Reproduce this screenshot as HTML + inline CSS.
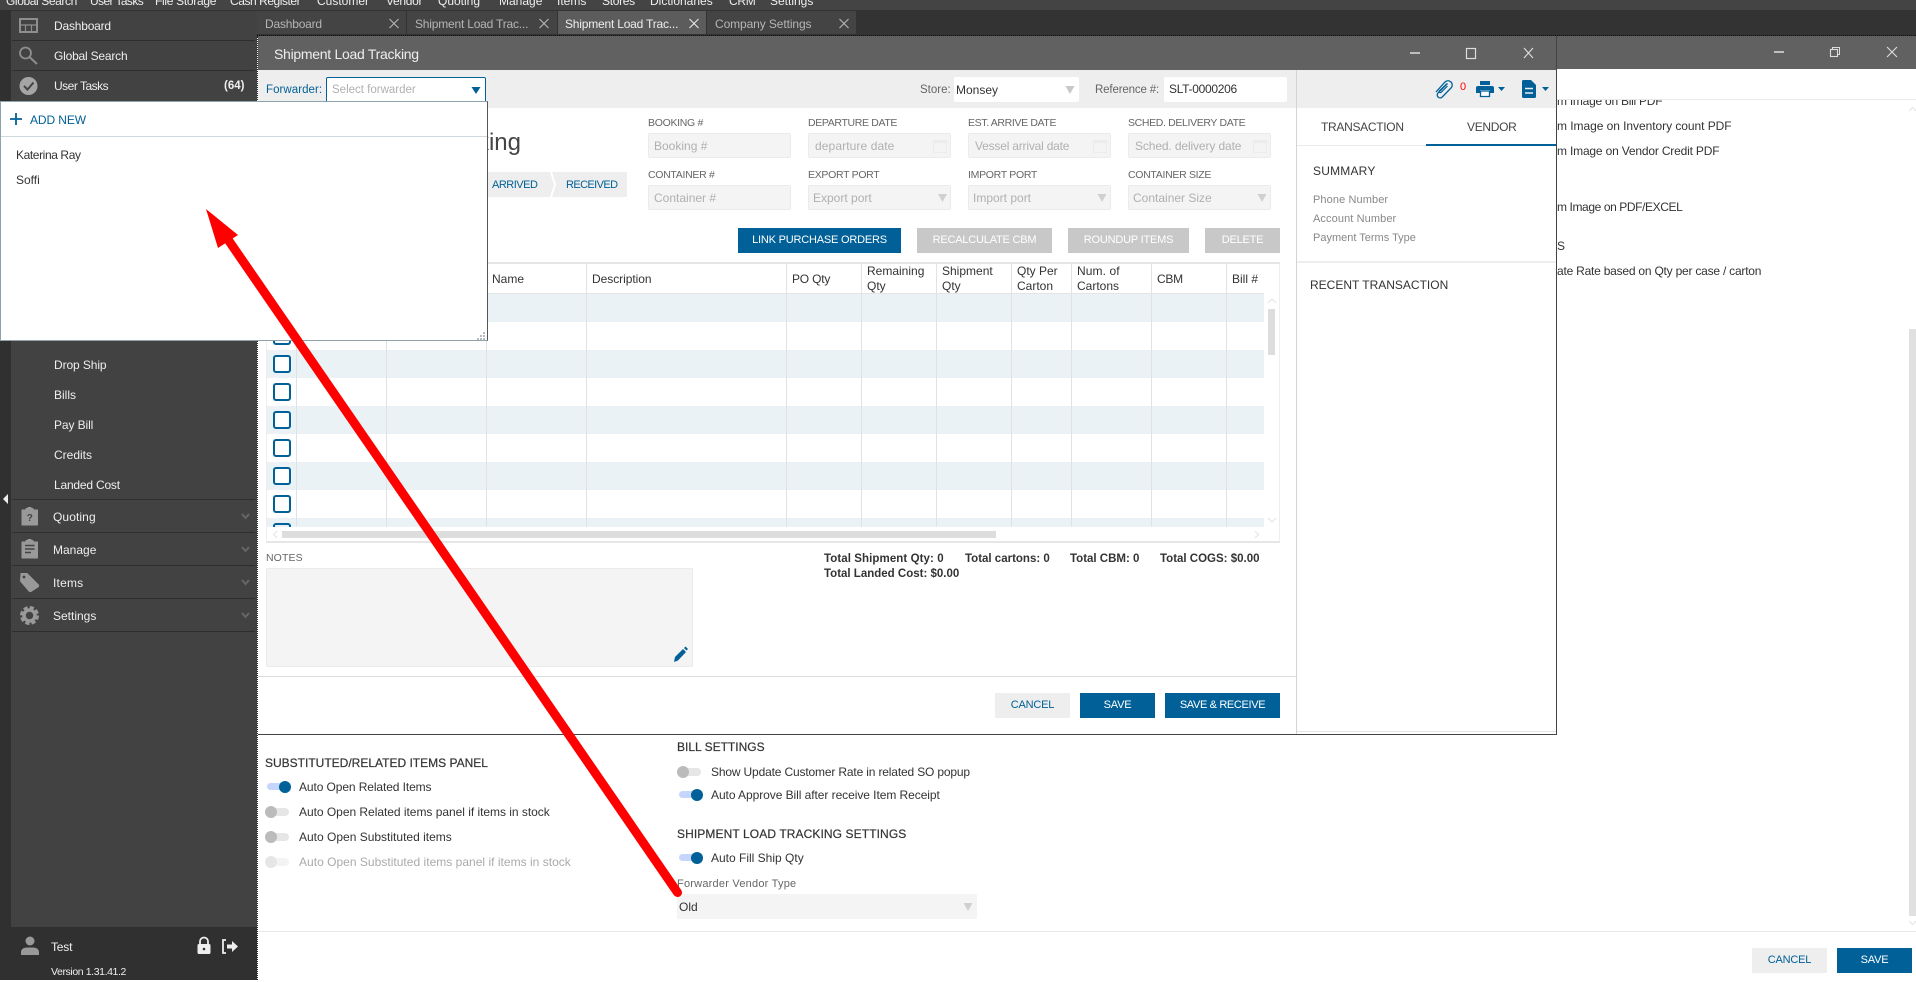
<!DOCTYPE html>
<html><head><meta charset="utf-8"><title>Shipment Load Tracking</title>
<style>
*{box-sizing:border-box}
html,body{margin:0;padding:0;width:1916px;height:980px;overflow:hidden;background:#fff;font-family:"Liberation Sans",sans-serif;font-size:12px;color:#333}
.a{position:absolute}
.t{position:absolute;white-space:nowrap;line-height:20px;height:20px;font-size:12px}
.s{color:#eee}
.u{font-size:10.5px;letter-spacing:-.3px;color:#666}
.ph{color:#b0b0b0}
.hd{-webkit-text-stroke:.2px #333}
.tot{font-weight:bold;font-size:11.5px;letter-spacing:0}
.inp{position:absolute;width:143px;height:25px;background:#f4f4f4;border:1px solid #ebebeb;border-radius:2px}
.b{position:absolute;height:25px;line-height:25px;text-align:center;color:#fff;font-size:11px;letter-spacing:-.2px;white-space:nowrap}
.bl{background:#006097}.gr{background:#c8c8c8}.lg{background:#eee;color:#006097}
.cb{position:absolute;left:273px;width:18px;height:18px;border:2px solid #006097;border-radius:3px;background:#fff}
.st{position:absolute;left:267px;width:997px;height:28px;background:#eaf2f6}
.cl{position:absolute;top:264px;height:263px;width:1px;background:#dde3e6}
.sep{position:absolute;left:12px;width:243px;height:1px;background:#2e2e2e}
.tk{position:absolute;width:22px;height:8px;border-radius:4px}
.kn{position:absolute;width:12px;height:12px;border-radius:50%}
.tab{position:absolute;top:11px;height:23px}
</style></head>
<body>
<!-- top menu -->
<div class="a" style="left:0;top:0;width:1916px;height:10px;background:#444;overflow:hidden">
<span class="t s" style="left:6px;top:-9px;letter-spacing:-.4px">Global Search</span>
<span class="t s" style="left:90px;top:-9px;letter-spacing:-.6px">User Tasks</span>
<span class="t s" style="left:155px;top:-9px;letter-spacing:-.3px">File Storage</span>
<span class="t s" style="left:230px;top:-9px;letter-spacing:-.45px">Cash Register</span>
<span class="t s" style="left:317px;top:-9px">Customer</span>
<span class="t s" style="left:386px;top:-9px;letter-spacing:-.3px">Vendor</span>
<span class="t s" style="left:438px;top:-9px">Quoting</span>
<span class="t s" style="left:499px;top:-9px">Manage</span>
<span class="t s" style="left:557px;top:-9px">Items</span>
<span class="t s" style="left:602px;top:-9px;letter-spacing:-.3px">Stores</span>
<span class="t s" style="left:650px;top:-9px">Dictionaries</span>
<span class="t s" style="left:729px;top:-9px;letter-spacing:-.3px">CRM</span>
<span class="t s" style="left:770px;top:-9px">Settings</span>
</div>
<!-- tab bar -->
<div class="a" style="left:0;top:10px;width:1916px;height:26px;background:#333;border-bottom:1px dotted #111"></div>
<div class="tab" style="left:257px;width:149px;background:#444"></div>
<div class="tab" style="left:407px;width:150px;background:#444"></div>
<div class="tab" style="left:558px;width:148px;background:#5c5c5c"></div>
<div class="tab" style="left:707px;width:149px;background:#444"></div>
<span class="t" style="left:265px;top:14px;color:#b5b5b5;letter-spacing:-.2px">Dashboard</span>
<span class="t" style="left:415px;top:14px;color:#b5b5b5;letter-spacing:-.2px">Shipment Load Trac...</span>
<span class="t" style="left:565px;top:14px;color:#eee;letter-spacing:-.2px">Shipment Load Trac...</span>
<span class="t" style="left:715px;top:14px;color:#b5b5b5;letter-spacing:-.1px">Company Settings</span>

<!-- sidebar -->
<div class="a" style="left:0;top:10px;width:12px;height:970px;background:#303030"></div>
<div class="a" style="left:11px;top:11px;width:246px;height:916px;background:#424242"></div>
<div class="a" style="left:0;top:927px;width:257px;height:53px;background:#303030"></div>
<div class="a" style="left:257px;top:36px;width:1px;height:944px;border-left:1px dotted #222"></div>
<div class="sep" style="top:40px"></div>
<div class="sep" style="top:70px"></div>
<div class="sep" style="top:499px"></div>
<div class="sep" style="top:532px"></div>
<div class="sep" style="top:565px"></div>
<div class="sep" style="top:598px"></div>
<div class="sep" style="top:631px"></div>
<span class="t s" style="left:54px;top:16px;letter-spacing:-.2px">Dashboard</span>
<span class="t s" style="left:54px;top:46px;letter-spacing:-.2px">Global Search</span>
<span class="t s" style="left:54px;top:76px;letter-spacing:-.5px">User Tasks</span>
<span class="t s" style="left:224px;top:76px;font-weight:bold;font-size:11.5px">(64)</span>
<span class="t s" style="left:54px;top:355px;letter-spacing:-.1px">Drop Ship</span>
<span class="t s" style="left:54px;top:385px">Bills</span>
<span class="t s" style="left:54px;top:415px;letter-spacing:-.1px">Pay Bill</span>
<span class="t s" style="left:54px;top:445px">Credits</span>
<span class="t s" style="left:54px;top:475px;letter-spacing:-.2px">Landed Cost</span>
<span class="t s" style="left:53px;top:507px;letter-spacing:.1px">Quoting</span>
<span class="t s" style="left:53px;top:540px">Manage</span>
<span class="t s" style="left:53px;top:573px;letter-spacing:.2px">Items</span>
<span class="t s" style="left:53px;top:606px">Settings</span>
<span class="t s" style="left:51px;top:937px;letter-spacing:-.2px">Test</span>
<span class="t s" style="left:51px;top:962px;font-size:10.5px;letter-spacing:-.4px">Version 1.31.41.2</span>

<!-- background window (settings) -->
<div class="a" style="left:1556px;top:36px;width:360px;height:33px;background:#616161"></div>
<div class="a" style="left:1557px;top:99px;width:359px;height:1px;background:#eaeaea"></div>
<div class="a" style="left:1557px;top:100px;width:352px;height:200px;overflow:hidden">
<span class="t" style="left:0;top:-9px;letter-spacing:-.25px">m Image on Bill PDF</span>
<span class="t" style="left:0;top:16px;letter-spacing:-.05px">m Image on Inventory count PDF</span>
<span class="t" style="left:0;top:41px;letter-spacing:-.18px">m Image on Vendor Credit PDF</span>
<span class="t" style="left:0;top:97px;letter-spacing:-.4px">m Image on PDF/EXCEL</span>
<span class="t" style="left:0;top:136px">S</span>
<span class="t" style="left:0;top:161px;letter-spacing:-.22px">ate Rate based on Qty per case / carton</span>
</div>
<div class="a" style="left:1909px;top:329px;width:7px;height:587px;background:#e0e0e0"></div>

<!-- lower settings -->
<span class="t hd" style="left:265px;top:753px">SUBSTITUTED/RELATED ITEMS PANEL</span>
<div class="tk" style="left:267px;top:783px;width:20px;height:7px;background:#c5d5fb"></div><div class="kn" style="left:279px;top:781px;background:#006097"></div>
<span class="t" style="left:299px;top:777px;letter-spacing:-.1px">Auto Open Related Items</span>
<div class="tk" style="left:267px;top:808px;background:#e6e6e6"></div><div class="kn" style="left:265px;top:806px;background:#bbb"></div>
<span class="t" style="left:299px;top:802px;letter-spacing:-.03px">Auto Open Related items panel if items in stock</span>
<div class="tk" style="left:267px;top:833px;background:#e6e6e6"></div><div class="kn" style="left:265px;top:831px;background:#bbb"></div>
<span class="t" style="left:299px;top:827px">Auto Open Substituted items</span>
<div class="tk" style="left:267px;top:858px;background:#f3f3f3"></div><div class="kn" style="left:265px;top:856px;background:#e6e6e6"></div>
<span class="t" style="left:299px;top:852px;color:#aaa;letter-spacing:.02px">Auto Open Substituted items panel if items in stock</span>

<span class="t hd" style="left:677px;top:737px">BILL SETTINGS</span>
<div class="tk" style="left:679px;top:768px;background:#e6e6e6"></div><div class="kn" style="left:677px;top:766px;background:#bbb"></div>
<span class="t" style="left:711px;top:762px;letter-spacing:-.16px">Show Update Customer Rate in related SO popup</span>
<div class="tk" style="left:679px;top:791px;width:20px;height:7px;background:#c5d5fb"></div><div class="kn" style="left:691px;top:789px;background:#006097"></div>
<span class="t" style="left:711px;top:785px;letter-spacing:-.06px">Auto Approve Bill after receive Item Receipt</span>
<span class="t hd" style="left:677px;top:824px;letter-spacing:.1px">SHIPMENT LOAD TRACKING SETTINGS</span>
<div class="tk" style="left:679px;top:854px;width:20px;height:7px;background:#c5d5fb"></div><div class="kn" style="left:691px;top:852px;background:#006097"></div>
<span class="t" style="left:711px;top:848px">Auto Fill Ship Qty</span>
<span class="t" style="left:677px;top:874px;font-size:11px;color:#666;letter-spacing:.22px">Forwarder Vendor Type</span>
<div class="a" style="left:677px;top:894px;width:300px;height:25px;background:#f4f4f4;border-radius:2px"></div>
<span class="t" style="left:679px;top:897px">Old</span>
<div class="a" style="left:258px;top:931px;width:1658px;height:1px;background:#e8e8e8"></div>
<div class="b lg" style="left:1752px;top:948px;width:75px">CANCEL</div>
<div class="b bl" style="left:1837px;top:948px;width:75px">SAVE</div>

<!-- modal -->
<div class="a" style="left:258px;top:36px;width:1299px;height:699px;background:#fff;border-right:1px solid #444;border-bottom:1px solid #444"></div>
<div class="a" style="left:258px;top:36px;width:1298px;height:34px;background:#616161"></div>
<span class="t" style="left:274px;top:44px;font-size:14px;color:#eee;letter-spacing:-.28px">Shipment Load Tracking</span>
<div class="a" style="left:258px;top:70px;width:1298px;height:38px;background:#eee"></div>
<span class="t" style="left:266px;top:80px;color:#006097;font-size:11.5px;letter-spacing:.05px">Forwarder:</span>
<div class="a" style="left:326px;top:77px;width:160px;height:26px;background:#fff;border:1px solid #006097;border-radius:2px"></div>
<span class="t ph" style="left:332px;top:80px;font-size:11.5px">Select forwarder</span>
<span class="t" style="left:920px;top:80px;color:#666;font-size:11.5px">Store:</span>
<div class="a" style="left:954px;top:77px;width:125px;height:25px;background:#fff;border-radius:2px"></div>
<span class="t" style="left:956px;top:80px">Monsey</span>
<span class="t" style="left:1095px;top:80px;color:#666;font-size:11.5px;letter-spacing:-.15px">Reference #:</span>
<div class="a" style="left:1164px;top:77px;width:123px;height:25px;background:#fff;border-radius:2px"></div>
<span class="t" style="left:1169px;top:79px;letter-spacing:-.3px">SLT-0000206</span>

<span class="t" style="right:1395px;top:133px;font-size:24px;color:#444">Shipment Load Tracking</span>
<div class="a" style="left:400px;top:172px;width:227px;height:25px;background:#eee"></div>
<span class="t" style="left:492px;top:175px;color:#006097;font-size:11px;letter-spacing:-.5px">ARRIVED</span>
<span class="t" style="left:566px;top:175px;color:#006097;font-size:11px;letter-spacing:-.6px">RECEIVED</span>

<span class="t u" style="left:648px;top:113px">BOOKING #</span>
<span class="t u" style="left:808px;top:113px;letter-spacing:-.35px">DEPARTURE DATE</span>
<span class="t u" style="left:968px;top:113px;letter-spacing:-.35px">EST. ARRIVE DATE</span>
<span class="t u" style="left:1128px;top:113px;letter-spacing:-.35px">SCHED. DELIVERY DATE</span>
<div class="inp" style="left:648px;top:133px"></div><div class="inp" style="left:808px;top:133px"></div><div class="inp" style="left:968px;top:133px"></div><div class="inp" style="left:1128px;top:133px"></div>
<span class="t ph" style="left:654px;top:136px">Booking #</span>
<span class="t ph" style="left:815px;top:136px;letter-spacing:.1px">departure date</span>
<span class="t ph" style="left:975px;top:136px;letter-spacing:-.2px">Vessel arrival date</span>
<span class="t ph" style="left:1135px;top:136px;letter-spacing:-.12px">Sched. delivery date</span>
<span class="t u" style="left:648px;top:165px">CONTAINER #</span>
<span class="t u" style="left:808px;top:165px">EXPORT PORT</span>
<span class="t u" style="left:968px;top:165px">IMPORT PORT</span>
<span class="t u" style="left:1128px;top:165px">CONTAINER SIZE</span>
<div class="inp" style="left:648px;top:185px"></div><div class="inp" style="left:808px;top:185px"></div><div class="inp" style="left:968px;top:185px"></div><div class="inp" style="left:1128px;top:185px"></div>
<span class="t ph" style="left:654px;top:188px">Container #</span>
<span class="t ph" style="left:813px;top:188px">Export port</span>
<span class="t ph" style="left:973px;top:188px">Import port</span>
<span class="t ph" style="left:1133px;top:188px">Container Size</span>

<div class="b bl" style="left:738px;top:228px;width:163px">LINK PURCHASE ORDERS</div>
<div class="b gr" style="left:917px;top:228px;width:135px">RECALCULATE CBM</div>
<div class="b gr" style="left:1068px;top:228px;width:121px">ROUNDUP ITEMS</div>
<div class="b gr" style="left:1205px;top:228px;width:75px">DELETE</div>

<!-- table -->
<div class="a" style="left:266px;top:262px;width:1014px;height:281px;background:#fff;border:1px solid #eee;border-top:2px solid #e6e6e6;border-bottom:2px solid #e6e6e6"></div>
<div class="a" style="left:267px;top:293px;width:997px;height:1px;background:#e4e4e4"></div>
<div class="st" style="top:294px"></div><div class="st" style="top:350px"></div><div class="st" style="top:406px"></div><div class="st" style="top:462px"></div><div class="st" style="top:518px;height:9px"></div>
<div class="cl" style="left:296px"></div><div class="cl" style="left:386px"></div><div class="cl" style="left:486px"></div><div class="cl" style="left:586px"></div><div class="cl" style="left:786px"></div><div class="cl" style="left:861px"></div><div class="cl" style="left:936px"></div><div class="cl" style="left:1011px"></div><div class="cl" style="left:1071px"></div><div class="cl" style="left:1151px"></div><div class="cl" style="left:1226px"></div>
<div class="cb" style="top:327px"></div><div class="cb" style="top:355px"></div><div class="cb" style="top:383px"></div><div class="cb" style="top:411px"></div><div class="cb" style="top:439px"></div><div class="cb" style="top:467px"></div><div class="cb" style="top:495px"></div>
<div class="a" style="left:273px;top:523px;width:18px;height:4px;border:2px solid #006097;border-bottom:0;border-radius:3px 3px 0 0"></div>
<span class="t" style="left:492px;top:269px">Name</span>
<span class="t" style="left:592px;top:269px;letter-spacing:-.05px">Description</span>
<span class="t" style="left:792px;top:269px;letter-spacing:-.2px">PO Qty</span>
<span class="t" style="left:867px;top:261px">Remaining</span><span class="t" style="left:867px;top:276px">Qty</span>
<span class="t" style="left:942px;top:261px">Shipment</span><span class="t" style="left:942px;top:276px">Qty</span>
<span class="t" style="left:1017px;top:261px">Qty Per</span><span class="t" style="left:1017px;top:276px">Carton</span>
<span class="t" style="left:1077px;top:261px;letter-spacing:.1px">Num. of</span><span class="t" style="left:1077px;top:276px">Cartons</span>
<span class="t" style="left:1157px;top:269px;letter-spacing:-.3px">CBM</span>
<span class="t" style="left:1232px;top:269px">Bill #</span>
<div class="a" style="left:1268px;top:309px;width:7px;height:46px;background:#ddd"></div>
<div class="a" style="left:282px;top:531px;width:714px;height:7px;background:#ddd"></div>

<span class="t" style="left:266px;top:548px;font-size:10.5px;color:#666;letter-spacing:.1px">NOTES</span>
<div class="a" style="left:266px;top:568px;width:427px;height:99px;background:#f4f4f4;border:1px solid #ebebeb;border-radius:2px"></div>
<span class="t tot" style="left:824px;top:549px;letter-spacing:.08px">Total Shipment Qty: 0</span>
<span class="t tot" style="left:965px;top:549px">Total cartons: 0</span>
<span class="t tot" style="left:1070px;top:549px">Total CBM: 0</span>
<span class="t tot" style="left:1160px;top:549px">Total COGS: $0.00</span>
<span class="t tot" style="left:824px;top:564px">Total Landed Cost: $0.00</span>
<div class="a" style="left:258px;top:676px;width:1038px;height:1px;background:#ddd"></div>
<div class="b lg" style="left:995px;top:693px;width:75px">CANCEL</div>
<div class="b bl" style="left:1080px;top:693px;width:75px">SAVE</div>
<div class="b bl" style="left:1165px;top:693px;width:115px;letter-spacing:-.35px">SAVE &amp; RECEIVE</div>

<!-- right panel -->
<div class="a" style="left:1296px;top:70px;width:260px;height:664px;background:#fff;border-left:1px solid #d4d4d4"></div>
<div class="a" style="left:1296px;top:70px;width:260px;height:38px;background:#eee;border-left:1px solid #d4d4d4"></div>
<div class="a" style="left:1297px;top:145px;width:259px;height:1px;background:#eaeaea"></div>
<div class="a" style="left:1426px;top:144px;width:130px;height:2px;background:#006097"></div>
<span class="t" style="left:1321px;top:117px;letter-spacing:-.3px;color:#444">TRANSACTION</span>
<span class="t" style="left:1467px;top:117px;letter-spacing:-.3px;color:#444">VENDOR</span>
<span class="t" style="left:1313px;top:161px;letter-spacing:.2px">SUMMARY</span>
<span class="t" style="left:1313px;top:190px;font-size:11px;color:#888;letter-spacing:.1px">Phone Number</span>
<span class="t" style="left:1313px;top:209px;font-size:11px;color:#888;letter-spacing:.1px">Account Number</span>
<span class="t" style="left:1313px;top:228px;font-size:11px;color:#888">Payment Terms Type</span>
<div class="a" style="left:1297px;top:261px;width:259px;height:2px;background:#eee"></div>
<span class="t" style="left:1310px;top:275px">RECENT TRANSACTION</span>
<div class="a" style="left:1297px;top:731px;width:259px;height:1px;background:#e4e4e4"></div>
<span class="t" style="left:1460px;top:77px;color:#f00;font-size:11px">0</span>

<!-- popover -->
<div class="a" style="left:0;top:101px;width:488px;height:240px;background:#fff;border:1px solid #8fa3ad;border-right:1px solid #555"></div>
<div class="a" style="left:1px;top:136px;width:486px;height:1px;background:#cfd8dc"></div>
<span class="t" style="left:30px;top:110px;color:#006097;font-size:12px;letter-spacing:-.1px">ADD NEW</span>
<span class="t" style="left:16px;top:145px;letter-spacing:-.4px">Katerina Ray</span>
<span class="t" style="left:16px;top:170px">Soffi</span>

<!-- icons & arrow overlay -->
<svg class="a" style="left:0;top:0" width="1916" height="980" viewBox="0 0 1916 980" xmlns="http://www.w3.org/2000/svg">
<!-- tab close -->
<g stroke="#bbb" stroke-width="1" fill="none">
<path d="M389.5 19L398.500 28M398.500 19L389.500 28"/><path d="M539.500 19L548.500 28M548.500 19L539.500 28"/>
<path d="M689.500 19L698.500 28M698.500 19L689.500 28" stroke="#eee"/><path d="M839.500 19L848.500 28M848.500 19L839.500 28"/>
</g>
<!-- window controls -->
<g stroke="#ddd" fill="none">
<path d="M1410 53H1420" stroke-width="1.500"/><rect x="1466.500" y="48.500" width="9" height="10" stroke-width="1.200"/><path d="M1524 48L1533 58M1533 48L1524 58" stroke-width="1.100"/>
<path d="M1774 52H1784" stroke-width="1.500"/><rect x="1830.500" y="49.500" width="7" height="7" stroke-width="1.100"/><path d="M1832.500 49V47.500H1839.500V54.500H1838" stroke-width="1"/><path d="M1887 47L1897 57M1897 47L1887 57" stroke-width="1.100"/>
</g>
<!-- sidebar icons -->
<g fill="none" stroke="#8e8e8e">
<rect x="20" y="19" width="17" height="13" stroke-width="2"/><path d="M20 25H37M25.500 25V32M31.500 25V32" stroke-width="1.200"/>
<circle cx="25.500" cy="53" r="5.500" stroke-width="1.800"/><path d="M29.500 57L37 64" stroke-width="2"/>
</g>
<circle cx="28.500" cy="86" r="9" fill="#a5a5a5"/><path d="M24 86L27.500 89.500L33.500 82.500" fill="none" stroke="#444" stroke-width="2"/>
<!-- quoting -->
<path d="M22 510H26V508.500H28V507.500H31V508.500H33V510H37.500V525H22Z" fill="#999" stroke="#999" stroke-linejoin="round"/>
<text x="29.800" y="521" text-anchor="middle" font-family="Liberation Sans" font-size="10" font-weight="bold" fill="#444">?</text>
<!-- manage -->
<path d="M22 542H26V540.500H28V539.500H31V540.500H33V542H37.500V558H22Z" fill="#999" stroke="#999" stroke-linejoin="round"/>
<path d="M25 545.500H34.500M25 549H34.500M25 552.500H31" stroke="#444" stroke-width="1.400"/>
<!-- items tag -->
<path d="M21 573.500H27L38.500 585Q39 586 38 587L31 591.500Q30 592 29 591L20.500 581Z" fill="#999" stroke="#999" stroke-linejoin="round"/>
<circle cx="24" cy="577" r="1.400" fill="#424242"/>
<!-- gear -->
<circle cx="29.500" cy="615.500" r="5.500" fill="none" stroke="#999" stroke-width="3.500"/>
<circle cx="29.500" cy="615.500" r="7.800" fill="none" stroke="#999" stroke-width="3.400" stroke-dasharray="4 2.130"/>
<!-- chevrons -->
<g fill="none" stroke="#666" stroke-width="2">
<path d="M242 514L245.500 518L249 514"/><path d="M242 547L245.500 551L249 547"/><path d="M242 580L245.500 584L249 580"/><path d="M242 613L245.500 617L249 613"/>
</g>
<path d="M8 494V504L3 499Z" fill="#eee"/>
<!-- user/lock/logout -->
<circle cx="30" cy="941" r="4.500" fill="#999"/><path d="M21 955V952Q21 948.500 26 947.500H34Q39 948.500 39 952V955Z" fill="#999"/>
<path d="M200 944V941.500a4 4 0 0 1 8 0V944" fill="none" stroke="#eee" stroke-width="1.800"/><rect x="197.500" y="944" width="13" height="10" rx="1.500" fill="#eee"/><circle cx="204" cy="949" r="1.300" fill="#303030"/>
<path d="M226 940H223V953H226" fill="none" stroke="#eee" stroke-width="1.800"/><path d="M227 944.500H232V941L238 946.500L232 952V948.500H227Z" fill="#eee"/>
<!-- carets -->
<path d="M471.500 87H480.500L476 94Z" fill="#006097"/>
<path d="M1065.500 86H1074.500L1070 94Z" fill="#c8c8c8"/>
<g fill="#d0d0d0"><path d="M938 194H947L942.500 202Z"/><path d="M1097.500 194H1106.500L1102 202Z"/><path d="M1257.500 194H1266.500L1262 202Z"/><path d="M963.500 903H972.500L968 911Z"/></g>
<!-- calendars -->
<g fill="#ececec"><path d="M933 140H947V153H933Z"/><path d="M1093 140H1107V153H1093Z"/><path d="M1253 140H1267V153H1253Z"/></g>
<g fill="#f4f4f4"><rect x="934" y="143" width="12" height="9"/><rect x="1094" y="143" width="12" height="9"/><rect x="1254" y="143" width="12" height="9"/></g>
<!-- plus -->
<path d="M16 113V125M10 119H22" stroke="#006097" stroke-width="1.800"/>
<!-- status chevron -->
<path d="M551 172L555 184.500L551 197" fill="none" stroke="#fff" stroke-width="2"/>
<!-- scroll arrows -->
<g fill="none" stroke="#e6e6e6" stroke-width="1.200">
<path d="M1268 303L1272 299L1276 303"/><path d="M1268 518L1272 522L1276 518"/><path d="M277 531L273.500 534.500L277 538"/><path d="M1255 531L1258.500 534.500L1255 538"/>
<path d="M1909 111L1912.500 107.500L1916 111"/><path d="M1909 921L1912.500 924.500L1916 921"/>
</g>
<!-- pencil -->
<path d="M674 662L675 657L683 649L686 652L678 660.500Z" fill="#006097"/><path d="M684 648L685.500 646.500L688 649L686.500 650.500Z" fill="#006097"/>
<!-- toolbar icons -->
<path d="M1447.500 83.500L1438 93a2.900 2.900 0 0 0 4.100 4.100L1451 88a4.200 4.200 0 0 0 -6 -6L1436 92" fill="none" stroke="#006097" stroke-width="1.300"/>
<path d="M1447.500 86L1441 92.500a1.200 1.200 0 0 1 -1.600 -1.600L1447 83.500" fill="none" stroke="#006097" stroke-width="1.200"/>
<path d="M1480 81H1490V85H1480Z" fill="#006097"/><path d="M1478 86H1492Q1494 86 1494 88V93H1490V90H1480V93H1476V88Q1476 86 1478 86Z" fill="#006097"/><path d="M1480.500 91H1489.500V96.500H1480.500Z" fill="#fff" stroke="#006097" stroke-width="1.300"/>
<path d="M1498 87H1505L1501.500 91Z" fill="#006097"/>
<path d="M1523.500 80H1531L1536 85V96.500Q1536 98 1534.500 98H1523.500Q1522 98 1522 96.500V81.500Q1522 80 1523.500 80Z" fill="#006097"/><path d="M1525 88.500H1533M1525 93H1533" stroke="#eee" stroke-width="1.600"/>
<path d="M1542 87H1549L1545.500 91Z" fill="#006097"/>
<!-- resize grip -->
<g fill="#bbb"><rect x="483" y="332" width="2" height="2"/><rect x="483" y="335" width="2" height="2"/><rect x="480" y="335" width="2" height="2"/><rect x="483" y="338" width="2" height="2"/><rect x="480" y="338" width="2" height="2"/><rect x="477" y="338" width="2" height="2"/></g>
<!-- red arrow -->
<path d="M229 241L677.500 892.500" fill="none" stroke="#f00" stroke-width="9" stroke-linecap="round"/>
<path d="M206 209L238 235L218 248Z" fill="#f00"/>
</svg>
</body></html>
